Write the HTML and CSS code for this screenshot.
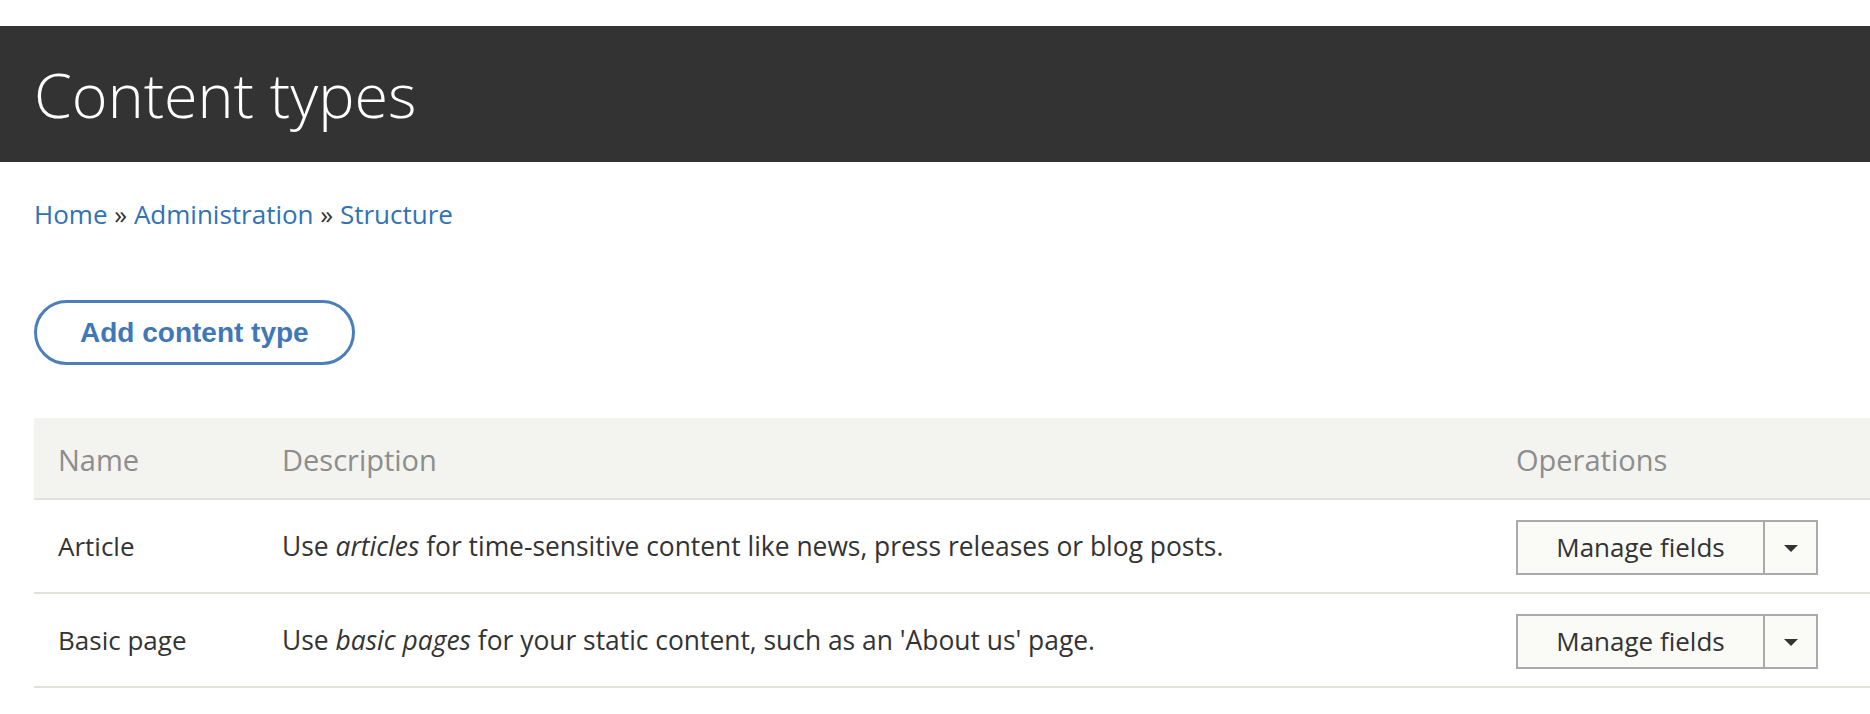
FILE: index.html
```html
<!DOCTYPE html>
<html lang="en">
<head>
<meta charset="utf-8">
<title>Content types</title>
<link rel="stylesheet" href="styles.css">
</head>
<body>
<header class="page-header">
  <h1 class="page-title">Content types</h1>
</header>
<main class="content">
  <nav class="breadcrumb">
    <a href="#">Home</a> <span class="sep">»</span> <a href="#">Administration</a> <span class="sep">»</span> <a href="#">Structure</a>
  </nav>
  <div class="actions">
    <a class="action-btn" href="#">Add content type</a>
  </div>
  <table class="types">
    <colgroup>
      <col class="col-name">
      <col class="col-desc">
      <col class="col-ops">
    </colgroup>
    <thead>
      <tr>
        <th>Name</th>
        <th>Description</th>
        <th>Operations</th>
      </tr>
    </thead>
    <tbody>
      <tr>
        <td>Article</td>
        <td class="desc">Use <em>articles</em> for time-sensitive content like news, press releases or blog posts.</td>
        <td class="ops">
          <div class="dropbutton">
            <a class="drop-main" href="#">Manage fields</a>
            <span class="drop-toggle"><svg width="14" height="8" viewBox="0 0 14 8"><polygon points="0,0 14,0 7,7" fill="#333"/></svg></span>
          </div>
        </td>
      </tr>
      <tr>
        <td>Basic page</td>
        <td class="desc">Use <em>basic pages</em> for your static content, such as an 'About us' page.</td>
        <td class="ops">
          <div class="dropbutton">
            <a class="drop-main" href="#">Manage fields</a>
            <span class="drop-toggle"><svg width="14" height="8" viewBox="0 0 14 8"><polygon points="0,0 14,0 7,7" fill="#333"/></svg></span>
          </div>
        </td>
      </tr>
    </tbody>
  </table>
</main>
</body>
</html>
```
FILE: styles.css
```css
html, body {
  margin: 0;
  padding: 0;
  background: #fff;
}
body {
  padding-top: 26px;
  font-family: "Open Sans", "Noto Sans", sans-serif;
  color: #333;
  overflow: hidden;
}
.page-header {
  background: #333333;
  height: 136px;
  display: flex;
  align-items: center;
  padding-left: 34px;
}
.page-title {
  margin: 0;
  font-family: "Open Sans", sans-serif;
  font-weight: 300;
  font-size: 61px;
  line-height: normal;
  color: #fff;
}
.content {
  padding-left: 34px;
}
.breadcrumb {
  margin-top: 33px;
  font-size: 26px;
  line-height: 39px;
  color: #333;
}
.breadcrumb a {
  color: #2f72b6;
  text-decoration: none;
}
.actions {
  margin-top: 66px;
  display: flex;
}
.action-btn {
  display: inline-block;
  border: 3px solid #4a7fbb;
  border-radius: 40px;
  padding: 13px 43px;
  font-family: "Liberation Sans", Arial, sans-serif;
  font-weight: bold;
  font-size: 28px;
  line-height: 33px;
  color: #3f78b8;
  text-decoration: none;
}
.types {
  margin-top: 53px;
  width: 100%;
  border-collapse: collapse;
  table-layout: fixed;
}
.col-name { width: 224px; }
.col-desc { width: 1234px; }
.types th {
  background: #f3f3ef;
  text-align: left;
  font-weight: normal;
  font-size: 29px;
  line-height: 39px;
  color: #8d8d8d;
  padding: 22px 24px 19px;
  border-bottom: 2px solid #e2e2dc;
}
.types td {
  font-size: 26px;
  line-height: 39px;
  color: #333;
  padding: 0 24px;
  border-bottom: 2px solid #e2e2dc;
  vertical-align: middle;
  white-space: nowrap;
}
.types td.desc {
  font-size: 26.4px;
}
.types td.ops {
  padding-top: 20px;
  padding-bottom: 17px;
}
.dropbutton {
  display: flex;
  height: 55px;
  width: 302px;
  box-sizing: border-box;
  border: 2px solid #aaa;
  background: #fafaf7;
}
.drop-main {
  width: 247px;
  box-sizing: border-box;
  border-right: 2px solid #aaa;
  display: flex;
  align-items: center;
  justify-content: center;
  color: #333;
  text-decoration: none;
  font-size: 26px;
}
.drop-toggle {
  flex: 1;
  display: flex;
  align-items: center;
  justify-content: center;
}
.drop-toggle svg {
  display: block;
  margin-top: 2px;
}
```
